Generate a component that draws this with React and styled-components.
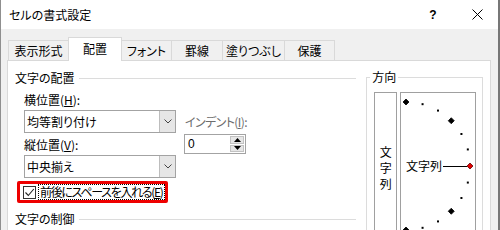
import styled, { createGlobalStyle } from "styled-components";

const GlobalStyle = createGlobalStyle`
  html, body {
    margin: 0;
    padding: 0;
  }
  body {
    font-family: "Noto Sans CJK JP", "Noto Sans", sans-serif;
    font-size: 12px;
    color: #000;
    background: #fff;
    font-feature-settings: "palt";
  }
  * {
    box-sizing: border-box;
  }
`;

const tabs = [
  { label: "表示形式", width: 61 },
  { label: "配置", width: 54, active: true },
  { label: "フォント", width: 51 },
  { label: "罫線", width: 52 },
  { label: "塗りつぶし", width: 63 },
  { label: "保護", width: 51 },
];

// angles of the orientation dial, -90..90 in 15 degree steps
const dial = [];
for (let a = 90; a >= -90; a -= 15) {
  const r = (a * Math.PI) / 180;
  dial.push({
    a,
    x: 5 + 64 * Math.cos(r),
    y: 73 - 64 * Math.sin(r),
  });
}

function Diamond({ x, y, s, fill, stroke }) {
  return (
    <polygon
      points={`${x},${y - s} ${x + s},${y} ${x},${y + s} ${x - s},${y}`}
      fill={fill}
      stroke={stroke}
      strokeWidth="0.8"
    />
  );
}

export default function App() {
  return (
    <>
      <GlobalStyle />
      <Window>
        <TitleBar>
          <Title>セルの書式設定</Title>
          <CaptionButton $w={46}>?</CaptionButton>
          <CaptionButton $w={42}>
            <svg width="11" height="11" viewBox="0 0 11 11">
              <path d="M0.5 0.5 L10.5 10.5 M10.5 0.5 L0.5 10.5" stroke="#000" strokeWidth="1" />
            </svg>
          </CaptionButton>
        </TitleBar>

        <Body>
          <TabStrip>
            {tabs.map((t) => (
              <Tab key={t.label} $w={t.width} $active={t.active}>
                {t.label}
              </Tab>
            ))}
          </TabStrip>

          <Panel>
            <LeftColumn>
              <GroupHeading>文字の配置</GroupHeading>

              <ControlGrid>
                <FieldLabel>
                  横位置(<u>H</u>):
                </FieldLabel>
                <span />

                <Select>
                  <SelectText>均等割り付け</SelectText>
                  <DropButton>
                    <svg width="8" height="5" viewBox="0 0 8 5">
                      <path d="M0.5 0.5 L4 4 L7.5 0.5" fill="none" stroke="#444" strokeWidth="1" />
                    </svg>
                  </DropButton>
                </Select>
                <FieldLabel $disabled $center>
                  インデント(<u>I</u>):
                </FieldLabel>

                <FieldLabel $center>
                  縦位置(<u>V</u>):
                </FieldLabel>
                <Spin>
                  <SpinValue>0</SpinValue>
                  <SpinButtons>
                    <SpinButton>
                      <svg width="7" height="4" viewBox="0 0 7 4">
                        <path d="M0 4 L3.5 0 L7 4 Z" fill="#000" />
                      </svg>
                    </SpinButton>
                    <SpinButton>
                      <svg width="7" height="4" viewBox="0 0 7 4">
                        <path d="M0 0 L3.5 4 L7 0 Z" fill="#000" />
                      </svg>
                    </SpinButton>
                  </SpinButtons>
                </Spin>

                <Select>
                  <SelectText>中央揃え</SelectText>
                  <DropButton>
                    <svg width="8" height="5" viewBox="0 0 8 5">
                      <path d="M0.5 0.5 L4 4 L7.5 0.5" fill="none" stroke="#444" strokeWidth="1" />
                    </svg>
                  </DropButton>
                </Select>
                <span />
              </ControlGrid>

              <Highlight>
                <CheckBox>
                  <svg width="11" height="11" viewBox="0 0 11 11">
                    <path d="M1.5 5.5 L4.3 8.5 L9.8 2" fill="none" stroke="#222" strokeWidth="1.1" />
                  </svg>
                </CheckBox>
                <FocusLabel>
                  前後にスペースを入れる(<u>E</u>)
                </FocusLabel>
              </Highlight>

              <GroupHeading>文字の制御</GroupHeading>
            </LeftColumn>

            <OrientationGroup>
              <Legend>方向</Legend>
              <VerticalBox>文字列</VerticalBox>
              <DialBox>
                <svg width="74" height="150" viewBox="0 0 74 150">
                  <text
                    x="5"
                    y="78"
                    fontSize="12"
                    fontFamily='"Noto Sans CJK JP", sans-serif'
                    style={{ fontFeatureSettings: '"palt"' }}
                  >
                    文字列
                  </text>
                  <line x1="42" y1="73.5" x2="66" y2="73.5" stroke="#000" strokeWidth="1" />
                  {dial.map((p) => {
                    if (p.a === 0)
                      return <Diamond key={p.a} x={p.x} y={p.y} s={3} fill="#e00000" stroke="#600" />;
                    if (p.a % 45 === 0)
                      return <Diamond key={p.a} x={p.x} y={p.y} s={3} fill="#000" stroke="#000" />;
                    return (
                      <rect key={p.a} x={p.x - 1} y={p.y - 1} width="2" height="2" fill="#000" />
                    );
                  })}
                </svg>
              </DialBox>
            </OrientationGroup>
          </Panel>
        </Body>
      </Window>
    </>
  );
}

//----- Styled Components

const Window = styled.div`
  width: 500px;
  height: 230px;
  overflow: hidden;
  display: flex;
  flex-direction: column;
  background-color: #f0f0f0;
  border-left: 1px solid #8f8f8f;
  border-right: 2px solid #777777;
`;

const TitleBar = styled.div`
  height: 29px;
  flex-shrink: 0;
  display: flex;
  align-items: center;
  background-color: #ffffff;
  padding-left: 8px;
`;

const Title = styled.div`
  flex: 1;
  font-size: 12px;
  line-height: 16px;
`;

const CaptionButton = styled.div`
  width: ${(p) => p.$w}px;
  height: 29px;
  display: flex;
  align-items: center;
  justify-content: center;
  font-family: "Liberation Sans", sans-serif;
  font-weight: bold;
  font-size: 12px;
`;

const Body = styled.div`
  flex: 1;
  display: flex;
  flex-direction: column;
  padding: 8px 7px 0 6px;
`;

const TabStrip = styled.div`
  height: 23px;
  display: flex;
  align-items: flex-end;
  padding-left: 1px;
`;

const Tab = styled.div`
  width: ${(p) => p.$w}px;
  height: ${(p) => (p.$active ? 24 : 20)}px;
  margin-left: -1px;
  margin-bottom: ${(p) => (p.$active ? -1 : 0)}px;
  position: relative;
  z-index: ${(p) => (p.$active ? 2 : 1)};
  display: flex;
  align-items: center;
  justify-content: center;
  padding-bottom: ${(p) => (p.$active ? 2 : 0)}px;
  background-color: ${(p) => (p.$active ? "#ffffff" : "#f0f0f0")};
  border: 1px solid #d9d9d9;
  border-bottom: none;
  font-size: 12px;

  &:first-child {
    margin-left: 0;
  }
`;

const Panel = styled.div`
  flex: 1;
  display: flex;
  background-color: #ffffff;
  border: 1px solid #d9d9d9;
  border-bottom: none;
  padding: 9px 7px 0 7px;
`;

const LeftColumn = styled.div`
  width: 342px;
  display: flex;
  flex-direction: column;
`;

const GroupHeading = styled.div`
  height: 16px;
  display: flex;
  align-items: center;
  gap: 4px;
  line-height: 16px;

  &::after {
    content: "";
    flex: 1;
    border-top: 1px solid #dcdcdc;
  }
`;

const ControlGrid = styled.div`
  display: grid;
  grid-template-columns: 152px 62px;
  grid-template-rows: 18px 24px 21px 23px;
  column-gap: 8px;
  margin-top: 6px;
  margin-left: 9px;
`;

const FieldLabel = styled.div`
  line-height: 16px;
  align-self: ${(p) => (p.$center ? "center" : "start")};
  color: ${(p) => (p.$disabled ? "#6d6d6d" : "#000")};
  white-space: nowrap;
  padding-left: ${(p) => (p.$disabled ? 1 : 0)}px;
  letter-spacing: ${(p) => (p.$disabled ? -0.6 : 0)}px;

  u {
    text-underline-offset: 1px;
  }
`;

const Select = styled.div`
  height: 23px;
  display: flex;
  align-items: stretch;
  border: 1px solid #a3a3a3;
  background-color: #ffffff;
`;

const SelectText = styled.div`
  flex: 1;
  display: flex;
  align-items: center;
  padding-left: 2px;
`;

const DropButton = styled.div`
  width: 16px;
  display: flex;
  align-items: center;
  justify-content: center;
  background-color: #e6e6e6;
  border-left: 1px solid #bdbdbd;
`;

const Spin = styled.div`
  height: 20px;
  align-self: start;
  display: flex;
  border: 1px solid #a3a3a3;
  background-color: #ffffff;
`;

const SpinValue = styled.div`
  flex: 1;
  display: flex;
  align-items: center;
  padding-left: 3px;
  font-family: "Liberation Sans", sans-serif;
  font-size: 12px;
`;

const SpinButtons = styled.div`
  width: 15px;
  display: flex;
  flex-direction: column;
  gap: 1px;
  padding: 1px 1px 1px 0;
`;

const SpinButton = styled.div`
  flex: 1;
  display: flex;
  align-items: center;
  justify-content: center;
  background-color: #e6e6e6;
  border: 1px solid #c2c2c2;
`;

const Highlight = styled.div`
  width: 151px;
  height: 22px;
  margin-top: 3px;
  margin-left: 2px;
  display: flex;
  align-items: center;
  gap: 2px;
  padding-left: 3px;
  border: 3px solid #ee0000;
  border-radius: 2px;
  margin-bottom: 8px;
`;

const CheckBox = styled.div`
  width: 13px;
  height: 13px;
  flex-shrink: 0;
  display: flex;
  align-items: center;
  justify-content: center;
  border: 1px solid #333333;
  background-color: #ffffff;
`;

const FocusLabel = styled.div`
  height: 16px;
  line-height: 14px;
  padding: 0 1px;
  border: 1px dotted #000;
  white-space: nowrap;
  letter-spacing: -1.3px;

  u {
    text-underline-offset: 1px;
  }
`;

const OrientationGroup = styled.div`
  position: relative;
  width: 117px;
  margin-left: 10px;
  margin-top: 7px;
  display: flex;
  align-items: flex-start;
  gap: 3px;
  padding: 14px 0 0 7px;
  border: 1px solid #dcdcdc;
  border-bottom: none;
`;

const Legend = styled.div`
  position: absolute;
  top: -9px;
  left: 3px;
  padding: 0 2px;
  line-height: 16px;
  background-color: #ffffff;
`;

const VerticalBox = styled.div`
  width: 23px;
  height: 150px;
  border: 1px solid #a0a0a0;
  writing-mode: vertical-rl;
  text-orientation: upright;
  letter-spacing: 4px;
  line-height: 21px;
  padding-top: 53px;
`;

const DialBox = styled.div`
  width: 76px;
  height: 150px;
  border: 1px solid #a0a0a0;
  display: flex;

  svg {
    display: block;
  }
`;
